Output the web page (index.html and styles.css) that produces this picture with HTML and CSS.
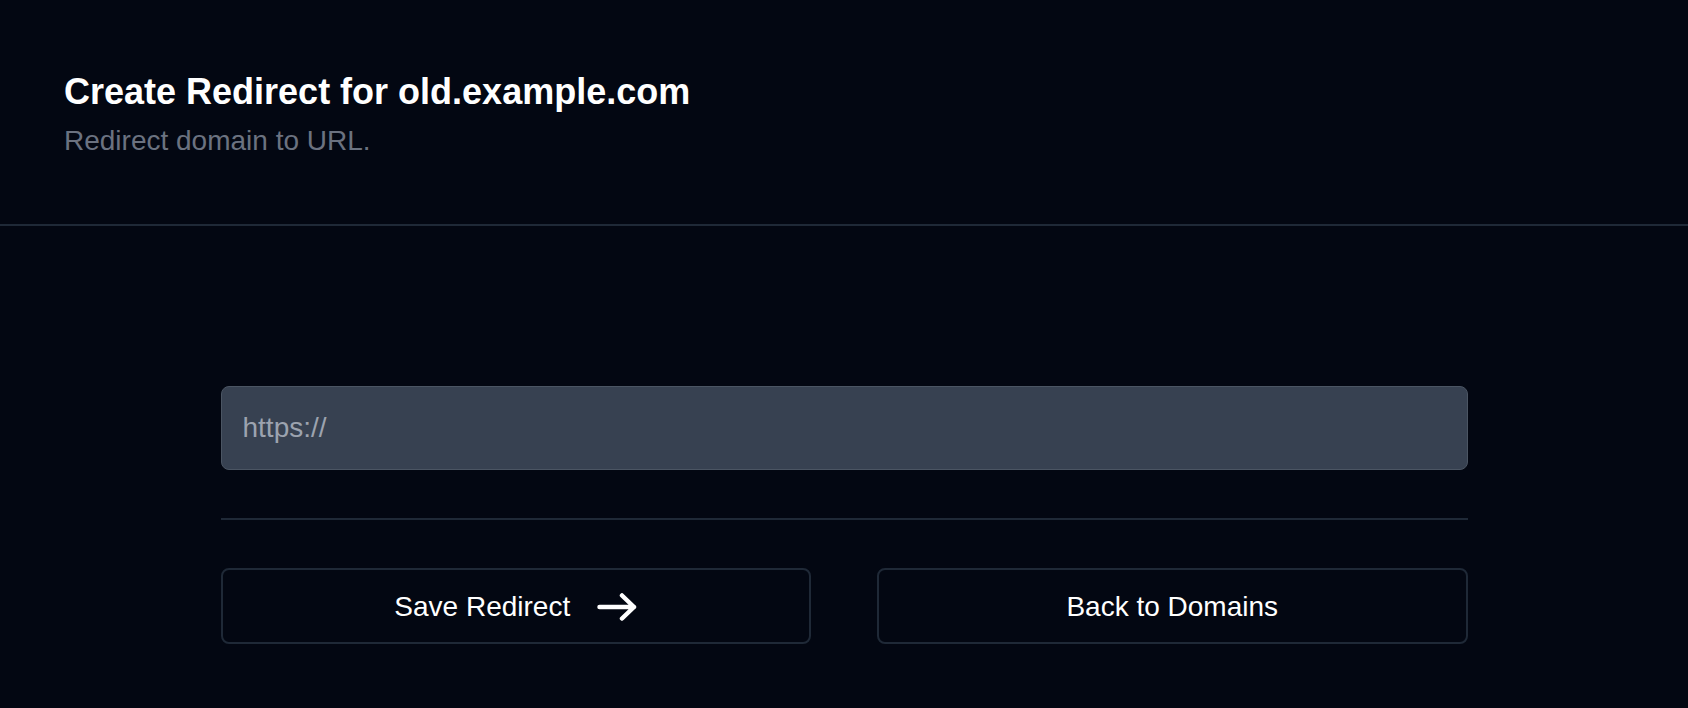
FILE: index.html
```html
<!DOCTYPE html>
<html lang="en">
<head>
<meta charset="utf-8">
<title>Create Redirect</title>
<link rel="stylesheet" href="styles.css">
</head>
<body>
  <header class="page-header">
    <h1 class="title">Create Redirect for old.example.com</h1>
    <p class="subtitle">Redirect domain to URL.</p>
  </header>
  <main class="content">
    <form class="redirect-form">
      <input class="url-input" type="text" placeholder="https://">
      <div class="divider"></div>
      <div class="actions">
        <button type="button" class="btn">
          <span>Save Redirect</span>
          <svg class="arrow" width="40" height="30" viewBox="0 0 40 30" fill="none" stroke="currentColor" stroke-width="4.5" stroke-linecap="round" stroke-linejoin="round"><path d="M2.5 15H37M25 3.5L37 15L25 26.5"/></svg>
        </button>
        <button type="button" class="btn"><span>Back to Domains</span></button>
      </div>
    </form>
  </main>
</body>
</html>
```

FILE: styles.css
```css
* { box-sizing: border-box; }
html, body {
  margin: 0;
  padding: 0;
  background: #030712;
  font-family: "Liberation Sans", Arial, sans-serif;
  color: #ffffff;
}
body { min-height: 708px; }

.page-header {
  height: 226px;
  padding: 71px 64px 0;
  border-bottom: 2px solid #1f2937;
}
.title {
  margin: 0;
  font-size: 36px;
  line-height: 41px;
  font-weight: 700;
  color: #ffffff;
}
.subtitle {
  margin: 13px 0 0;
  font-size: 28px;
  line-height: 32px;
  color: #6b7280;
}

.content {
  padding-top: 160px;
}
.redirect-form {
  width: 1247px;
  margin: 0 auto;
}
.url-input {
  display: block;
  width: 100%;
  height: 84px;
  padding: 0 21px;
  background: #374151;
  border: 1px solid #4b5563;
  border-radius: 8px;
  font-family: "Liberation Sans", Arial, sans-serif;
  font-size: 28px;
  color: #e5e7eb;
  outline: none;
}
.url-input::placeholder { color: #9ca3af; }

.divider {
  height: 2px;
  margin: 48px 0;
  background: #1f2937;
}

.actions {
  display: grid;
  grid-template-columns: 1fr 1fr;
  column-gap: 66px;
}
.btn {
  display: flex;
  align-items: center;
  justify-content: center;
  gap: 27px;
  height: 76px;
  background: #030712;
  border: 2px solid #1f2937;
  border-radius: 8px;
  font-family: "Liberation Sans", Arial, sans-serif;
  font-size: 28px;
  color: #ffffff;
  cursor: pointer;
  padding: 2px 0 0;
}
.arrow { display: block; }
```
